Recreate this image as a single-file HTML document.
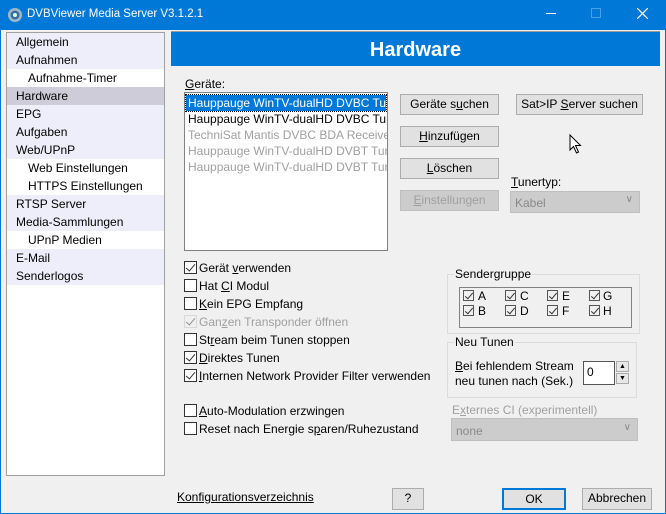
<!DOCTYPE html>
<html><head><meta charset="utf-8"><style>
*{box-sizing:border-box}
body{margin:0;width:666px;height:514px;background:#f0f0f0;font-family:"Liberation Sans",sans-serif;font-size:12px;color:#000;position:relative;overflow:hidden}
.a{position:absolute;white-space:nowrap}
.frame{position:absolute;left:0;top:0;width:666px;height:514px;border:1px solid #0078d7;border-top:none}
.title{position:absolute;left:0;top:0;width:666px;height:30px;background:#0078d7;color:#fff;font-size:11.5px}
.nav{position:absolute;left:6px;top:32px;width:159px;height:444px;background:#fff;border:1px solid #a0a0a0}
.nav div{height:18px;line-height:18px;padding-left:9px;background:#eeeefa}
.nav div.s{padding-left:21px;background:#fff}
.nav div.h{background:#cdccd8}
.btn{position:absolute;height:21px;border:1px solid #adadad;background:#e1e1e1;text-align:center;line-height:19px}
.dis{color:#a0a0a0;background:#ccc;border-color:#bfbfbf}
.cb{position:absolute;width:13px;height:13px;border:1px solid #333;background:#fff}
.cb.c::after{content:"";position:absolute;left:3px;top:0px;width:4px;height:8px;border:solid #333;border-width:0 1.5px 1.5px 0;transform:rotate(40deg)}
.cbl{position:absolute;white-space:nowrap}
.grp{position:absolute;border:1px solid #dcdcdc}
.sc{position:absolute;width:11px;height:11px;border:1px solid #555}
.sc::after{content:"";position:absolute;left:3px;top:0;width:3px;height:7px;border:solid #333;border-width:0 1.3px 1.3px 0;transform:rotate(40deg)}
u{text-decoration:underline}
</style></head><body>
<div class="title">
<svg class="a" style="left:7px;top:7px" width="16" height="16" viewBox="0 0 16 16"><circle cx="8" cy="8" r="7" fill="#9fb8cc"/><circle cx="8" cy="8" r="4.5" fill="#3b6e96"/><circle cx="8" cy="8" r="2" fill="#cfe"/></svg>
<span class="a" style="left:27px;top:8px">DVBViewer Media Server V3.1.2.1</span>
<div class="a" style="left:546px;top:13px;width:10px;height:1px;background:#fff"></div>
<div class="a" style="left:591px;top:8px;width:10px;height:10px;border:1px solid #4d9fe3"></div>
<svg class="a" style="left:637px;top:8px" width="11" height="11"><path d="M0 0L11 11M11 0L0 11" stroke="#fff" stroke-width="1.2"/></svg>
</div>
<div class="frame"></div>
<div class="nav">
<div>Allgemein</div><div>Aufnahmen</div><div class="s">Aufnahme-Timer</div><div class="h">Hardware</div><div>EPG</div><div>Aufgaben</div><div>Web/UPnP</div><div class="s">Web Einstellungen</div><div class="s">HTTPS Einstellungen</div><div>RTSP Server</div><div>Media-Sammlungen</div><div class="s">UPnP Medien</div><div>E-Mail</div><div>Senderlogos</div>
</div>
<div class="a" style="left:171px;top:31px;width:489px;height:35px;background:#0078d7;border-top:1px solid #999;color:#fff;font-weight:bold;font-size:20px;text-align:center;line-height:36px">Hardware</div>

<span class="a" style="left:185px;top:77px"><u>G</u>eräte:</span>
<div class="a" style="left:184px;top:92px;width:204px;height:159px;background:#fff;border:1px solid #828282;overflow:hidden">
<div style="position:absolute;left:1px;top:2px;width:200px;height:16px;background:#0078d7;color:#fff;line-height:16px;padding-left:2px;outline:1px dotted #000">Hauppauge WinTV-dualHD DVBC Tuner</div>
<div style="position:absolute;left:3px;top:18px;line-height:16px">Hauppauge WinTV-dualHD DVBC Tuner<br><span style="color:#a0a0a0">TechniSat Mantis DVBC BDA Receiver<br>Hauppauge WinTV-dualHD DVBT Tuner<br>Hauppauge WinTV-dualHD DVBT Tuner</span></div>
</div>

<div class="btn" style="left:400px;top:94px;width:99px">Geräte s<u>u</u>chen</div>
<div class="btn" style="left:516px;top:94px;width:127px">Sat&gt;IP <u>S</u>erver suchen</div>
<div class="btn" style="left:400px;top:126px;width:99px"><u>H</u>inzufügen</div>
<div class="btn" style="left:400px;top:158px;width:99px"><u>L</u>öschen</div>
<div class="btn dis" style="left:400px;top:190px;width:99px"><u>E</u>instellungen</div>
<span class="a" style="left:511px;top:175px"><u>T</u>unertyp:</span>
<div class="a" style="left:510px;top:191px;width:130px;height:22px;background:#ccc;border:1px solid #bfbfbf;color:#8a8a8a;padding:4px 0 0 4px">Kabel<span style="position:absolute;right:6px;top:2px;font-size:10px">&#8744;</span></div>
<svg class="a" style="left:569px;top:134px" width="13" height="20"><path d="M1 1L1 16L4.5 12.5L7.5 19L9.5 18L6.5 11.5L11.5 11.5Z" fill="#fff" stroke="#000"/></svg>

<div class="cb c" style="left:184px;top:261px"></div><span class="cbl" style="left:199px;top:261px">Gerät <u>v</u>erwenden</span>
<div class="cb" style="left:184px;top:279px"></div><span class="cbl" style="left:199px;top:279px">Hat <u>C</u>I Modul</span>
<div class="cb" style="left:184px;top:297px"></div><span class="cbl" style="left:199px;top:297px"><u>K</u>ein EPG Empfang</span>
<div class="cb c" style="left:184px;top:315px;border-color:#c4c4c4;background:#f0f0f0;opacity:.5"></div><span class="cbl" style="left:199px;top:315px;color:#a0a0a0">Gan<u>z</u>en Transponder öffnen</span>
<div class="cb" style="left:184px;top:333px"></div><span class="cbl" style="left:199px;top:333px">St<u>r</u>eam beim Tunen stoppen</span>
<div class="cb c" style="left:184px;top:351px"></div><span class="cbl" style="left:199px;top:351px"><u>D</u>irektes Tunen</span>
<div class="cb c" style="left:184px;top:369px"></div><span class="cbl" style="left:199px;top:369px"><u>I</u>nternen Network Provider Filter verwenden</span>
<div class="cb" style="left:184px;top:404px"></div><span class="cbl" style="left:199px;top:404px"><u>A</u>uto-Modulation erzwingen</span>
<div class="cb" style="left:184px;top:422px"></div><span class="cbl" style="left:199px;top:422px">Reset nach Energie s<u>p</u>aren/Ruhezustand</span>

<div class="grp" style="left:447px;top:274px;width:193px;height:60px"></div>
<span class="a" style="left:454px;top:267px;background:#f0f0f0;padding:0 1px">Sendergruppe</span>
<div class="a" style="left:459px;top:287px;width:173px;height:41px;border:1px solid #828282"></div>
<div class="sc" style="left:463px;top:290px"></div><span class="a" style="left:478px;top:289px">A</span>
<div class="sc" style="left:505px;top:290px"></div><span class="a" style="left:520px;top:289px">C</span>
<div class="sc" style="left:547px;top:290px"></div><span class="a" style="left:562px;top:289px">E</span>
<div class="sc" style="left:589px;top:290px"></div><span class="a" style="left:603px;top:289px">G</span>
<div class="sc" style="left:463px;top:305px"></div><span class="a" style="left:478px;top:304px">B</span>
<div class="sc" style="left:505px;top:305px"></div><span class="a" style="left:520px;top:304px">D</span>
<div class="sc" style="left:547px;top:305px"></div><span class="a" style="left:562px;top:304px">F</span>
<div class="sc" style="left:589px;top:305px"></div><span class="a" style="left:603px;top:304px">H</span>

<div class="grp" style="left:447px;top:342px;width:190px;height:56px"></div>
<span class="a" style="left:454px;top:335px;background:#f0f0f0;padding:0 1px">Neu Tunen</span>
<span class="a" style="left:455px;top:359px;line-height:15px"><u>B</u>ei fehlendem Stream<br>neu tunen nach (Sek.)</span>
<div class="a" style="left:583px;top:361px;width:32px;height:24px;background:#fff;border:1px solid #555;padding:3px 0 0 3px">0</div>
<div class="a" style="left:616px;top:361px;width:13px;height:11px;border:1px solid #aaa;background:#e8e8e8;font-size:7px;text-align:center;line-height:9px">&#9650;</div>
<div class="a" style="left:616px;top:373px;width:13px;height:11px;border:1px solid #aaa;background:#e8e8e8;font-size:7px;text-align:center;line-height:9px">&#9660;</div>

<span class="a" style="left:452px;top:403px;color:#a0a0a0">E<u>x</u>ternes CI (experimentell)</span>
<div class="a" style="left:451px;top:418px;width:187px;height:23px;background:#ccc;border:1px solid #bfbfbf;color:#8a8a8a;padding:5px 0 0 4px">none<span style="position:absolute;right:6px;top:3px;font-size:10px">&#8744;</span></div>

<span class="a" style="left:177px;top:490px;text-decoration:underline">Konfigurationsverzeichnis</span>
<div class="btn" style="left:392px;top:488px;width:32px;height:22px">?</div>
<div class="btn" style="left:502px;top:488px;width:64px;height:22px;border:2px solid #0078d7;line-height:18px">OK</div>
<div class="btn" style="left:582px;top:488px;width:70px;height:22px">Abbrechen</div>
</body></html>
